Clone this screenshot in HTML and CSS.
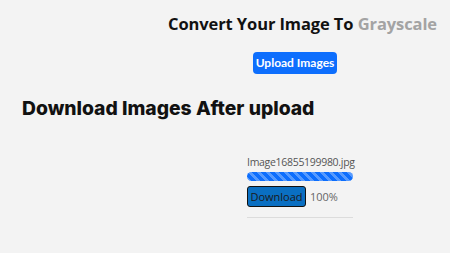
FILE: index.html
```html
<!DOCTYPE html>
<html lang="en">
<head>
    <meta charset="UTF-8">
    <meta name="viewport" content="width=device-width, initial-scale=1.0">
    <title>Convert Your Image To Grayscale</title>
    <link rel="stylesheet" href="styles.css">
</head>
<body>

    <header class="top">
        <h1 class="title">Convert Your Image To <span class="gray">Grayscale</span></h1>
        <div class="upload-row">
            <button class="upload-btn">Upload Images</button>
        </div>
    </header>

    <h2 class="subtitle">Download Images After upload</h2>

    <div class="file-list">
        <div class="file-item">
            <p class="file-name">Image16855199980.jpg</p>
            <div class="progress">
                <div class="progress-bar"></div>
            </div>
            <div class="file-actions">
                <button class="download-btn">Download</button>
                <span class="percent">100%</span>
            </div>
        </div>
    </div>

</body>
</html>
```

FILE: styles.css
```css
/* Reset */
* {
    margin: 0;
    padding: 0;
    box-sizing: border-box;
}

body {
    font-family: 'Open Sans', sans-serif;
    background-color: #f3f3f3;
    color: #222;
    padding-top: 12px;
}

/* Header */
.top {
    padding-left: 168px;
}

.title {
    font-family: 'Open Sans', sans-serif;
    font-weight: 700;
    font-size: 16.5px;
    letter-spacing: -0.1px;
    line-height: 24px;
    color: #111;
    white-space: nowrap;
}

.gray {
    color: #a3a3a3;
}

.upload-row {
    margin-top: 14px;
    padding-left: 85px;
}

.upload-btn {
    background-color: #0d6efd;
    color: #fff;
    border: none;
    border-radius: 4px;
    font-family: 'Lato', sans-serif;
    font-weight: 700;
    font-size: 12px;
    width: 84px;
    height: 22px;
}

/* Sub heading */
.subtitle {
    font-family: 'Inter', sans-serif;
    font-weight: 800;
    font-size: 19.3px;
    line-height: 24px;
    margin-top: 22px;
    padding-left: 22px;
    color: #111;
}

/* Lista de arquivos */
.file-list {
    margin-top: 35px;
    padding-left: 247px;
}

.file-item {
    width: 106px;
    padding-bottom: 10px;
    border-bottom: 1px solid #dcdcdc;
}

.file-name {
    font-size: 10.5px;
    letter-spacing: -0.3px;
    line-height: 14px;
    color: #555;
}

.progress {
    margin-top: 3px;
    height: 9px;
    border-radius: 5px;
    background-color: #e9ecef;
    overflow: hidden;
}

.progress-bar {
    width: 100%;
    height: 100%;
    background-color: #0d6efd;
    background-image: linear-gradient(45deg, rgba(255, 255, 255, 0.3) 25%, transparent 25%, transparent 50%, rgba(255, 255, 255, 0.3) 50%, rgba(255, 255, 255, 0.3) 75%, transparent 75%, transparent);
    background-size: 9px 9px;
}

.file-actions {
    display: flex;
    align-items: center;
    gap: 4px;
    margin-top: 5px;
}

.download-btn {
    background-color: #0a6fc2;
    color: #1a1a1a;
    border: 1px solid #111;
    border-radius: 3px;
    font-family: 'Open Sans', sans-serif;
    font-size: 11px;
    width: 59px;
    height: 21px;
}

.percent {
    font-size: 11px;
    color: #666;
}
```
